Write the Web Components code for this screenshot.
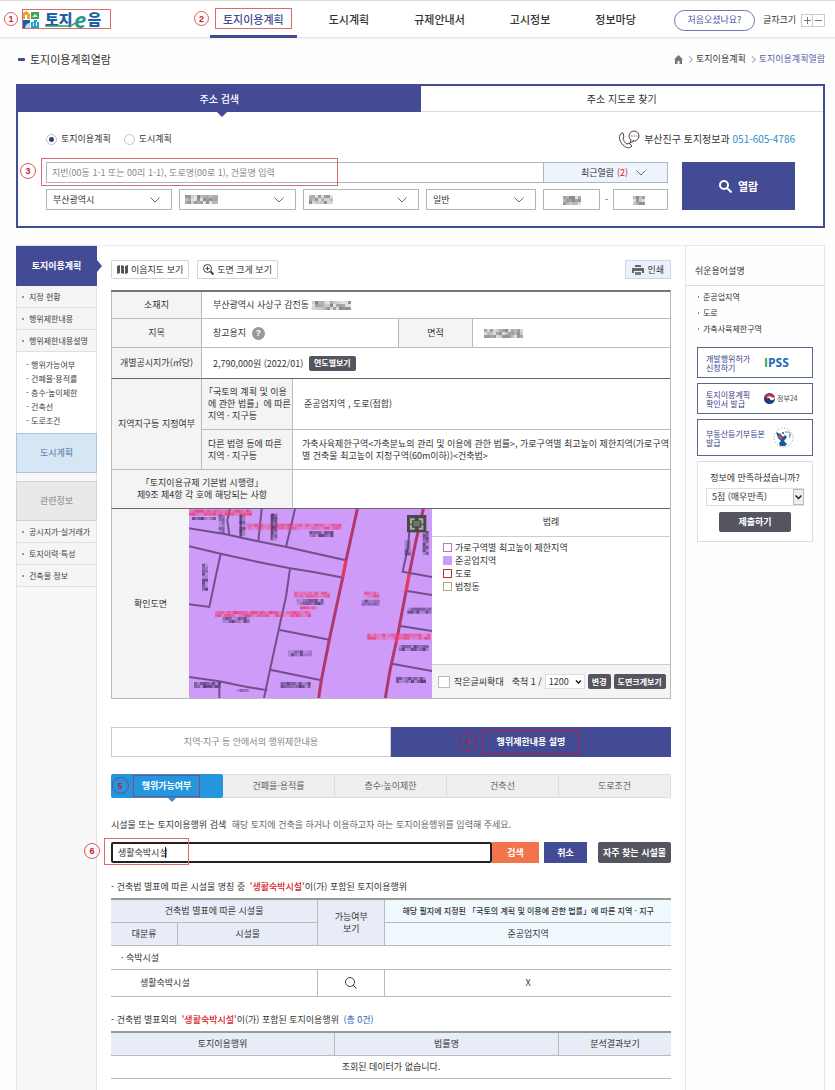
<!DOCTYPE html>
<html lang="ko">
<head>
<meta charset="utf-8">
<title>토지이음 - 토지이용계획열람</title>
<style>
html{height:100%}
body{margin:0;min-height:100%;display:flex;flex-direction:column;background:#fefefe;color:#444;
font-family:"Noto Sans CJK KR","Noto Sans",sans-serif;font-size:9px;line-height:12px}
land-page{flex:1}
</style>
</head>
<body>
<land-page></land-page>
<script>
const BASE = `*{box-sizing:border-box}button,input,select{font:inherit;color:inherit;margin:0;padding:0;border-radius:0}button{cursor:pointer}
a{color:inherit;text-decoration:none}ul,ol,h1,h2,h3,p{margin:0;padding:0;list-style:none;font:inherit}svg{display:block}
table{border-spacing:0;width:100%;table-layout:fixed}th,td{font-weight:400;padding:0}`;

function define(name, css, html, setup) {
  const t = document.createElement('template');
  t.innerHTML = `<style>${BASE}${css}</style>${html}`;
  customElements.define(name, class extends HTMLElement {
    constructor() {
      super();
      this.attachShadow({ mode: 'open' }).append(t.content.cloneNode(true));
    }
    connectedCallback() { if (setup) setup.call(this, this.shadowRoot); }
  });
}

function random(seed) {
  let s = seed * 7919 + 17;
  return () => (s = (s * 16807) % 2147483647) / 2147483647;
}

/* Grey mosaic that hides private values */
define('pixel-mask', `:host{display:inline-block;vertical-align:middle;pointer-events:none}`, `<svg aria-hidden="true"></svg>`, function (root) {
  const w = +this.getAttribute('w'), h = +this.getAttribute('h'), c = 3, svg = root.querySelector('svg');
  const r = random(+this.getAttribute('seed') || 1);
  svg.setAttribute('width', w); svg.setAttribute('height', h);
  let out = '';
  for (let y = 0; y < h; y += c) for (let x = 0; x < w; x += c) {
    const g = Math.round(135 + r() * 95);
    out += `<rect x="${x}" y="${y}" width="${c}" height="${c}" fill="rgb(${g},${g},${g})"/>`;
  }
  svg.innerHTML = out;
});

/* Red guide number and red guide frame */
define('guide-number', `:host{position:absolute;display:flex;align-items:center;justify-content:center;width:15px;height:15px;border:1px solid #dc5a5a;border-radius:50%;
color:#c8202c;font:700 9px/12px "Liberation Sans",sans-serif}`, `<slot></slot>`);
define('guide-frame', `:host{position:absolute;display:block;border:1px solid #dd6a6a;pointer-events:none}`, ``);

define('site-logo', `:host{display:block;position:relative;margin-left:22px;width:88px;height:20px}
a{display:flex;align-items:center;height:20px;font-weight:900;font-size:15px;line-height:20px;color:#1c5fa6}
.mark{margin-right:6px}.e{font-style:italic;color:#2a9a8c;font-size:22px;line-height:16px;width:15px;text-align:center;font-family:"Open Sans","Noto Sans",sans-serif;font-weight:700}
.swoosh{position:absolute;left:22px;top:12px}
guide-number{left:-18px;top:3px;width:14px;height:14px}guide-frame{left:0;top:0;right:-1px;bottom:0}`,
`<a href="#"><svg class="mark" width="17" height="17" viewBox="0 0 17 17" aria-hidden="true">
<path d="M0 3 4 0l4 3v5H0z" fill="#f0a02c"/><path d="M3 4h2v4H3z" fill="#fff"/>
<path d="M9 1h8v7H9z" fill="#3aa655"/><path d="m10 6 3-3 3 3z" fill="#d9f0d5"/>
<path d="M0 9h8v8H0z" fill="#1d5fa8"/><path d="M3 17a5 5 0 0 1 5-5v5z" fill="#bcd7ee"/>
<path d="M9 11h3V9h3v2h2v6H9z" fill="#1ba0d0"/><path d="M11 12h1v3h-1zm3-1h1v4h-1z" fill="#fff"/></svg>
<span>토지</span><span class="e">e</span><span>음</span></a>
<svg class="swoosh" width="62" height="8" viewBox="0 0 62 8" aria-hidden="true"><path d="M1 5h24c3 0 4-1 6-3" fill="none" stroke="#2f9d63" stroke-width="1.500"/></svg>
<guide-frame></guide-frame><guide-number>1</guide-number>`);

define('site-header', `:host{display:flex;align-items:center;height:38px;border-top:1px solid #ddd;border-bottom:1px solid #e6e6e6;box-shadow:0 1px 2px #eee;background:#fff;padding-right:10px}
nav{display:flex;gap:45px;margin-left:113px;font-size:11px;line-height:36px;font-weight:500;color:#333;white-space:nowrap}
nav a{position:relative}.on{color:#434b94}.on::after{content:"";position:absolute;left:-13px;right:-13px;bottom:-1px;height:3px;background:#434b94}
guide-frame{left:-8px;right:-8px;top:7px;bottom:8px}guide-number{left:-29px;top:10px}
.tools{margin-left:auto;display:flex;align-items:center;color:#333;white-space:nowrap;padding-top:2px}
.first{width:81px;height:21px;border:1px solid #6d78b2;border-radius:11px;background:#fff;color:#4a569c;margin-right:8px}
.size{display:flex;margin-left:5px}.size button{width:12px;height:13px;border:1px solid #ccc;background:#fff;color:#666;display:grid;place-items:center}.size button+button{border-left:0}`,
`<site-logo></site-logo>
<nav><a class="on" href="#">토지이용계획<guide-frame></guide-frame><guide-number>2</guide-number></a><a href="#">도시계획</a><a href="#">규제안내서</a><a href="#">고시정보</a><a href="#">정보마당</a></nav>
<div class="tools"><button class="first">처음오셨나요?</button><span>글자크기</span>
<span class="size"><button aria-label="글자 크게"><svg width="7" height="7"><path d="M0 3.500h7M3.500 0v7" stroke="#777"/></svg></button><button aria-label="글자 작게"><svg width="7" height="7"><path d="M0 3.500h7" stroke="#777"/></svg></button></span></div>`);

define('page-title', `:host{display:flex;align-items:center;justify-content:space-between;height:42px;margin:0 10px 4px 18px;color:#333}
h1{display:flex;align-items:center;gap:5px;font-size:11px;font-weight:400;line-height:16px}h1::before{content:"";width:7px;height:3px;border-radius:1px;background:#434b94}
ol{display:flex;align-items:center;gap:4px}li{display:flex;align-items:center;gap:4px}li+li::before{content:"";width:4px;height:4px;border:solid #aaa;border-width:1px 1px 0 0;transform:rotate(45deg)}.here{color:#5560a6}`,
`<h1>토지이용계획열람</h1><ol><li><a href="#" aria-label="홈"><svg width="9" height="9" viewBox="0 0 9 9"><path d="M4.500 0 9 4.500H8V9H5.500V6h-2v3H1V4.500H0z" fill="#777"/></svg></a></li><li><a href="#">토지이용계획</a></li><li class="here">토지이용계획열람</li></ol>`);

const CHEVRON = `<svg class="chev" width="10" height="6" viewBox="0 0 10 6" aria-hidden="true"><path d="m.5.5 4.500 4.500L9.500.5" fill="none" stroke="#5b6b86"/></svg>`;

/* Drop-down with a thin chevron; an optional mask can cover its value */
define('pick-box', `:host{display:block;position:relative;height:21px;color:#333}
select{appearance:none;width:100%;height:100%;border:1px solid #aab8c4;background:#fff;padding:0 6px}
.chev{position:absolute;right:12px;top:8px;pointer-events:none}.mask{position:absolute;left:6px;top:4px;line-height:12px;pointer-events:none}`,
`<select><option></option></select><span class="mask"><slot></slot></span>${CHEVRON}`, function (root) {
  root.querySelector('option').textContent = this.getAttribute('value') || '';
  root.querySelector('select').setAttribute('aria-label', this.getAttribute('label'));
});

define('search-panel', `:host{display:block;margin:0 10px 0 16px;border:2px solid #434b94;background:#fff}
.tabs{display:grid;grid-template-columns:1fr 1fr;height:26px;font-size:10px;color:#333}
.tabs button{position:relative;border:0;border-bottom:1px solid #ddd;background:#fff}
.tabs .on{background:#434b94;color:#fff;border-color:#434b94;font-weight:500}.tabs .on::after{content:"";position:absolute;left:50%;top:100%;margin-left:-3px;border:6px solid transparent;border-top-color:#434b94;border-bottom:0}
.body{padding:15px 28px 16px}.top{display:flex;align-items:center;height:24px;margin-bottom:11px;color:#333}
label{display:flex;align-items:center;gap:4px;margin-right:13px}
input[type=radio]{appearance:none;width:11px;height:11px;border:1px solid #bbc4cc;border-radius:50%;background:#fff}
input[type=radio]:checked{background:radial-gradient(#2f4468 0 2px,#fff 3px)}
.tel{margin-left:auto;display:flex;align-items:center;gap:3px;font-size:10px;font-weight:400}.tel a{color:#2b8ec6}
.form{display:flex;gap:14px}.fields{flex:1;display:grid;gap:6px;min-width:0}
.row{display:flex}.row>*{min-width:0}.addr{position:relative;flex:1}
.addr input{width:100%;height:21px;border:1px solid #aab8c4;border-right:0;padding:0 5px;background:#fff}::placeholder{color:#888;opacity:1}
.recent{width:125px;height:21px;border:1px solid #aab8c4;background:#eef4fc;color:#333;display:flex;align-items:center;justify-content:center;gap:3px;padding-left:16px}.recent b{font-weight:400;color:#d8232a}.recent .chev{margin-left:5px}
.picks{gap:7px}.lot{width:125px;display:flex;align-items:center;justify-content:space-between}
.num{position:relative;width:57px;height:21px}.num input{width:100%;height:100%;border:1px solid #aab8c4;background:#fff}.num pixel-mask{position:absolute;left:20px;top:7px}
.go{width:113px;border:0;background:#434b94;color:#fff;font-size:11px;font-weight:700;display:flex;align-items:center;justify-content:center;gap:6px}
guide-frame{left:-5px;top:-4px;width:297px;height:28px}guide-number{left:-26px;top:1px;width:16px;height:16px}`,
`<div class="tabs"><button class="on">주소 검색</button><button>주소 지도로 찾기</button></div>
<div class="body"><div class="top"><label><input type="radio" name="kind" checked>토지이용계획</label><label><input type="radio" name="kind">도시계획</label>
<div class="tel"><svg width="23" height="19" viewBox="0 0 23 19" aria-hidden="true" fill="none" stroke="#444"><path d="M4 3c-4 2-3 8 1 12 3 3 6 4 9 1l-3-3-2 1c-2-1-4-4-4-6l1-1-1-4z"/><circle cx="16" cy="6" r="5"/><path d="m13 10-1 3 4-2" fill="#fff"/><path d="M13 6h1.500m1 0H17m1 0h1.500" stroke="#d0503c"/></svg><span>부산진구 토지정보과 <a href="tel:051-605-4786">051-605-4786</a></span></div></div>
<div class="form"><div class="fields"><div class="row"><div class="addr"><input aria-label="주소" placeholder="지번(00동 1-1 또는 00리 1-1), 도로명(00로 1), 건물명 입력"><guide-frame></guide-frame><guide-number>3</guide-number></div><button class="recent">최근열람 <b>(2)</b>${CHEVRON}</button></div>
<div class="row picks"><pick-box style="flex:126" label="시도" value="부산광역시"></pick-box><pick-box style="flex:117" label="시군구"><pixel-mask w="33" h="9" seed="3"></pixel-mask></pick-box><pick-box style="flex:116" label="읍면동"><pixel-mask w="24" h="9" seed="8"></pixel-mask></pick-box><pick-box style="flex:110" label="구분" value="일반"></pick-box>
<div class="lot"><div class="num"><input aria-label="본번"><pixel-mask w="18" h="9" seed="5"></pixel-mask></div><span>-</span><div class="num" style="width:55px"><input aria-label="부번"><pixel-mask w="12" h="9" seed="9"></pixel-mask></div></div></div></div>
<button class="go"><svg width="13" height="13" viewBox="0 0 13 13" fill="none" stroke="#fff" stroke-width="2"><circle cx="5" cy="5" r="4"/><path d="m8 8 4.500 4.500"/></svg>열람</button></div></div>`);

define('side-menu', `:host{display:block;border:solid #e4e4e4;border-width:1px 1px 0;background:#f8f8f8;color:#444;font-size:8px;white-space:nowrap}
.head{position:relative;display:grid;place-items:center;height:40px;margin:0 -1px;background:#434b94;color:#fff;font-size:9px;font-weight:700}
.head::after{content:"";position:absolute;left:100%;top:14px;border:6px solid transparent;border-left:5px solid #434b94;border-right:0}
.list li{display:flex;align-items:center;height:22px;padding-left:5px;gap:4px;border-bottom:1px solid #e0e0e0;background:#f5f5f5}.list li::before{content:"";width:2px;height:2px;margin-right:1px;background:#999}
.sub{padding:6px 0 5px 9px;background:#fff}.sub li{line-height:14px}
.sky{background:#d7e6f4;border:1px solid #a9c6e0;color:#6c8eb4;font-weight:500}.grey{background:#e9e9e9;border:1px solid #d2d2d2;color:#999;margin-top:8px;font-weight:500}.sky::after,.grey::after{content:none}`,
`<a class="head" href="#">토지이용계획</a>
<ul class="list"><li><a href="#">지정 현황</a></li><li><a href="#">행위제한내용</a></li><li><a href="#">행위제한내용설명</a></li></ul>
<ul class="sub"><li><a href="#">- 행위가능여부</a></li><li><a href="#">- 건폐율·용적률</a></li><li><a href="#">- 층수·높이제한</a></li><li><a href="#">- 건축선</a></li><li><a href="#">- 도로조건</a></li></ul>
<a class="head sky" href="#">도시계획</a><div class="head grey">관련정보</div>
<ul class="list"><li><a href="#">공시지가·실거래가</a></li><li><a href="#">토지이력·특성</a></li><li><a href="#">건축물 정보</a></li></ul>`);

define('view-tools', `:host{display:flex;gap:8px;margin-bottom:11px}
button{height:19px;border:1px solid #d5d5d5;border-radius:1px;background:#fff;color:#333;display:flex;align-items:center;gap:3px;padding:0 5px;white-space:nowrap}
.print{margin-left:auto;background:#eaf1fb;border-color:#ccd6e4;padding:0 6px}`,
`<button><svg width="11" height="9" viewBox="0 0 11 9"><path d="M0 1 3 0v8L0 9zM4 0l3 1v8L4 8zM8 1l3-1v8L8 9z" fill="#555"/></svg>이음지도 보기</button>
<button><svg width="11" height="11" viewBox="0 0 11 11" fill="none" stroke="#444"><circle cx="4.500" cy="4.500" r="4"/><path d="M2.500 4.500h4m-2-2v4"/><path d="m7.500 7.500 3 3" stroke-width="2"/></svg>도면 크게 보기</button>
<button class="print"><svg width="12" height="10" viewBox="0 0 12 10"><path d="M3 0h6v2H3zM0 3h12v5h-2V6H2v2H0z" fill="#666"/><path d="M3 7h6v3H3z" fill="#777"/></svg>인쇄</button>`);

/* Parcel map: lot lines, road edges and masked labels */
define('parcel-map', `:host{display:block;height:189px;background:#cf9bf6}svg{width:100%;height:100%}`,
`<svg viewBox="27 26 729 567" preserveAspectRatio="xMidYMid slice" role="img" aria-label="확인도면">
<rect width="800" height="620" fill="#cf9bf8"/>
<g fill="none" stroke="#70508c" stroke-width="6">
<path d="M27 84 100 96 130 100 230 122 320 140 400 158 498 180M27 138 122 160 230 184 330 204 405 216 490 232M122 160 108 225 88 320 27 312M330 204 318 290 296 388 270 508 252 593M296 388 448 418M270 508 424 540M27 530 118 543 190 558 262 570M118 543v50M345 26 318 140M150 26 142 60 148 104M182 40v70M245 26 235 122M275 40v80M690 70 684 140 668 214 756 230M682 272 756 284M656 376 756 392M636 490 756 512"/></g>
<g fill="none" stroke="#b0386c" stroke-width="9"><path d="M532 26 498 180 488 232 448 418 424 540 416 593M730 26 706 130 688 220 652 410 630 510 616 593"/></g>
<g fill="none" stroke="#ee3560" stroke-width="9"><path d="M498 180 488 232M688 220 678 272M654 400 648 430"/></g>
<g class="labels"></g>
<rect x="681" y="44" width="58" height="52" fill="#48474c"/><path d="M690 54h14v6h-8v10h-6zm26 0h14v16h-6V60h-8zM690 74h6v8h8v6h-14zm34 0h6v14h-14v-6h8z" fill="#a9b093"/><path d="M700 62h20v16h-20z" fill="#707268"/>
</svg>`, function (root) {
  const r = random(4);
  const run = (x, y, w, h, colour) => {
    let s = '';
    for (let i = 0; i < w; i += 9) for (let j = 0; j < h; j += 9)
      s += `<rect x="${x + i}" y="${y + j}" width="9" height="9" fill="${colour}" opacity="${(0.15 + r() * 0.7).toFixed(2)}"/>`;
    return s;
  };
  const red = '#f03a6c', ink = '#4a3268';
  root.querySelector('.labels').innerHTML = [
    [27, 28, 189, 18, red], [196, 70, 288, 18, red], [342, 274, 108, 18, red], [105, 332, 288, 18, red], [360, 318, 54, 9, red], [553, 274, 45, 18, red], [562, 400, 189, 18, red],
    [36, 50, 72, 9, ink], [388, 92, 72, 18, ink], [350, 296, 81, 18, ink], [128, 350, 81, 18, ink], [324, 450, 72, 18, ink], [302, 545, 90, 18, ink], [545, 298, 54, 18, ink],
    [682, 322, 72, 18, ink], [656, 434, 90, 18, ink], [648, 530, 90, 18, ink], [42, 545, 81, 18, ink], [170, 566, 36, 9, ink],
    [66, 190, 18, 81, ink], [274, 40, 18, 81, ink], [178, 44, 18, 63, ink], [116, 44, 18, 54, ink], [728, 92, 18, 72, ink], [674, 120, 18, 45, ink]
  ].map(a => run(...a)).join('');
});

define('map-legend', `:host{display:flex;flex-direction:column;height:189px;color:#333;white-space:nowrap}
h3{height:28px;line-height:26px;text-align:center;border-bottom:1px solid #ccc}
ul{flex:1;padding:4px 11px}li{display:flex;align-items:center;gap:3px;line-height:13px;height:13px}li::before{content:"";width:7px;height:7px;border:1px solid var(--line);background:var(--fill,#fff)}
.foot{display:flex;align-items:center;height:34px;border-top:1px solid #ccc;background:#f4f4f4;padding:0 6px}
label{display:flex;align-items:center;gap:4px}input{appearance:none;width:12px;height:12px;border:1px solid #bbb;background:#fff}
.scale{margin:0 3px 0 8px}select{appearance:none;width:40px;height:15px;border:1px solid #ddd;background:#fff;padding-left:3px}.sel{position:relative}.sel svg{position:absolute;right:3px;top:6px;pointer-events:none}
button{height:15px;border:0;border-radius:2px;background:#555560;color:#fff;font-weight:700;padding:0 4px;margin-left:3px;font-size:8px}`,
`<h3>범례</h3><ul><li style="--line:#c36cd0">가로구역별 최고높이 제한지역</li><li style="--line:#cf9bf8;--fill:#cf9bf8">준공업지역</li><li style="--line:#b0303c">도로</li><li style="--line:#b5a694">법정동</li></ul>
<div class="foot"><label><input type="checkbox">작은글씨확대</label><label class="scale" for="s">축척 1 /</label><span class="sel"><select id="s"><option>1200</option></select><svg width="7" height="4" viewBox="0 0 7 4"><path d="m1 .5 2.500 2.500L6 .5" fill="none" stroke="#222" stroke-width="1.500"/></svg></span><button>변경</button><button>도면크게보기</button></div>`);

define('land-table', `:host{display:block;margin-bottom:28px;color:#333}
table{border-top:2px solid #777;border-right:1px solid #bbb}th,td{border:solid #bbb;border-width:0 0 1px 1px;line-height:12px}
th{background:#f4f4f4;text-align:center}td{padding:0 11px;text-align:left}
.dark th,.dark td{border-bottom-color:#666}.l{text-align:left;padding-left:6px;white-space:nowrap}.q{text-indent:-4px}
.zero{padding:0;border-left:0}.nw{white-space:nowrap}.zone{padding:0 0 0 9px;white-space:nowrap}
.help{display:inline-grid;place-items:center;width:13px;height:13px;border:0;border-radius:50%;background:#999;color:#fff;font:700 9px/13px "Liberation Sans",sans-serif;margin-left:3px}
.year{height:15px;border:0;border-radius:2px;background:#555560;color:#fff;font-weight:700;font-size:8px;padding:0 5px;margin-left:3px}`,
`<table><colgroup><col style="width:78px"><col style="width:12px"><col style="width:91px"><col style="width:106px"><col style="width:34px"><col style="width:40px"><col></colgroup>
<tr style="height:27px"><th colspan="2">소재지</th><td colspan="5">부산광역시 사상구 감전동 <pixel-mask w="39" h="9" seed="12"></pixel-mask></td></tr>
<tr style="height:29px"><th colspan="2">지목</th><td colspan="2">창고용지 <button class="help" aria-label="도움말">?</button></td><th colspan="2">면적</th><td><pixel-mask w="39" h="9" seed="21"></pixel-mask></td></tr>
<tr class="dark" style="height:31px"><th colspan="2" class="nw">개별공시지가(㎡당)</th><td colspan="5">2,790,000원 (2022/01) <button class="year">연도별보기</button></td></tr>
<tr style="height:51px"><th colspan="2" rowspan="2" class="nw">지역지구등 지정여부</th><th class="l"><div class="q">「국토의 계획 및 이용</div>에 관한 법률」에 따른<br>지역 · 지구등</th><td colspan="4">준공업지역 , 도로(접합)</td></tr>
<tr style="height:40px"><th class="l">다른 법령 등에 따른<br>지역 · 지구등</th><td colspan="4" class="zone">가축사육제한구역&lt;가축분뇨의 관리 및 이용에 관한 법률&gt;, 가로구역별 최고높이 제한지역(가로구역<br>별 건축물 최고높이 지정구역(60m이하))&lt;건축법&gt;</td></tr>
<tr class="dark" style="height:39px"><th colspan="3">「토지이용규제 기본법 시행령」<br>제9조 제4항 각 호에 해당되는 사항</th><td colspan="4"></td></tr>
<tr><th>확인도면</th><td colspan="4" class="zero"><parcel-map></parcel-map></td><td colspan="2" class="zero"><map-legend></map-legend></td></tr></table>`);

define('detail-tabs', `:host{display:block;margin-bottom:18px}
.big,.small{display:grid}.big{grid-template-columns:1fr 1fr;height:30px;margin-bottom:17px}.small{grid-template-columns:repeat(5,1fr);height:24px}
button{border:1px solid #ccc;background:#fff;color:#888}.big .on{background:#434b94;border-color:#434b94;color:#fff;font-weight:700}
.small button{position:relative;border-color:#ddd;border-left-width:0;background:#eee;color:#666}.small button:last-child{border-radius:0 2px 2px 0}
.small .on{background:#2496de;border-color:#2496de;color:#fff;font-weight:700;border-radius:2px}.small .on::after{content:"";position:absolute;left:50%;top:100%;border:5px solid transparent;border-top-color:#2496de;border-bottom:0}
.t{position:relative;display:inline-block}.big guide-frame{left:-15px;right:-15px;top:-6px;bottom:-6px;border-color:#b01c48}.big guide-number{left:-38px;top:-3px;width:18px;height:18px;border-color:#b01c48;font-size:8px}
.small guide-frame{left:-9px;right:-9px;top:-5px;bottom:-5px;border-color:#8a4a78}.small guide-number{left:-30px;top:-3px;width:17px;height:17px;border-color:#6d4a80}`,
`<div class="big"><button>지역·지구 등 안에서의 행위제한내용</button><button class="on"><span class="t">행위제한내용 설명<guide-frame></guide-frame><guide-number>4</guide-number></span></button></div>
<div class="small"><button class="on"><span class="t">행위가능여부<guide-frame></guide-frame><guide-number>5</guide-number></span></button><button>건폐율·용적률</button><button>층수·높이제한</button><button>건축선</button><button>도로조건</button></div>`);

define('facility-search', `:host{display:block;color:#333;margin-bottom:15px}
p{line-height:18px;margin-bottom:8px;color:#666}label{color:#333;margin-right:3px}
.row{display:flex}.field{position:relative;flex:1}input{width:100%;height:21px;border:2px solid #222;border-radius:2px;padding:0 5px;background:#fff;outline:0}
.caret{position:absolute;left:54px;top:5px;width:1px;height:11px;background:#222}
button{height:21px;border:0;color:#fff;font-weight:700;white-space:nowrap}.find{width:47px;background:#f2744c}.cancel{width:43px;margin:0 11px 0 5px;background:#434b94}.often{width:73px;background:#555560;border-radius:2px}
guide-frame{left:-7px;top:-4px;width:85px;height:27px}guide-number{left:-27px;top:1px;width:16px;height:16px}`,
`<p><label for="f">시설물 또는 토지이용행위 검색</label> 해당 토지에 건축을 하거나 이용하고자 하는 토지이용행위를 입력해 주세요.</p>
<div class="row"><div class="field"><input id="f" value="생활숙박시설"><span class="caret"></span><guide-frame></guide-frame><guide-number>6</guide-number></div><button class="find">검색</button><button class="cancel">취소</button><button class="often">자주 찾는 시설물</button></div>`);

define('result-tables', `:host{display:block;color:#333}
h2{line-height:18px;margin-bottom:2px}h2 b{margin-left:2px;color:#d8232a;font-weight:500}h2 i{font-style:normal;color:#2a62c0;margin-left:2px}
table{border-top:2px solid #999;margin-bottom:14px}th,td{border-bottom:1px solid #bbb;text-align:center}th{background:#e8ecf7}.sky{background:#f0fafe}.r{border-right:1px solid #bbb}.long{font-size:8px;font-weight:500}
.l{text-align:left;padding-left:10px}.l2{text-align:left;padding-left:29px}td button{display:grid;margin:auto;border:0;background:none}`,
`<h2>- 건축법 별표에 따른 시설물 명칭 중 <b>'생활숙박시설'</b>이(가) 포함된 토지이용행위</h2>
<table><colgroup><col style="width:12%"><col style="width:25%"><col style="width:12%"><col></colgroup>
<tr style="height:23px"><th class="r" colspan="2">건축법 별표에 따른 시설물</th><th class="r" rowspan="2">가능여부<br>보기</th><th class="sky long">해당 필지에 지정된 「국토의 계획 및 이용에 관한 법률」에 따른 지역 · 지구</th></tr>
<tr style="height:23px"><th class="r">대분류</th><th class="r">시설물</th><th class="sky">준공업지역</th></tr>
<tr style="height:24px"><td class="l" colspan="4">· 숙박시설</td></tr>
<tr style="height:27px"><td class="r l2" colspan="2">생활숙박시설</td><td class="r"><button aria-label="가능여부 보기"><svg width="12" height="12" viewBox="0 0 12 12" fill="none" stroke="#444"><circle cx="5" cy="5" r="4.500"/><path d="m8 8 3.500 3.500"/></svg></button></td><td>X</td></tr></table>
<h2>- 건축법 별표외의 <b>'생활숙박시설'</b>이(가) 포함된 토지이용행위 <i>(총 0건)</i></h2>
<table style="margin:0"><colgroup><col style="width:40%"><col style="width:40%"><col></colgroup>
<tr style="height:23px"><th class="r">토지이용행위</th><th class="r">법률명</th><th>분석결과보기</th></tr><tr style="height:23px"><td colspan="3">조회된 데이터가 없습니다.</td></tr></table>`);

define('info-aside', `:host{display:block;border:solid #e8e8e8;border-width:1px 1px 0;color:#333;white-space:nowrap}
h2{height:40px;border-bottom:1px solid #ddd;padding:19px 9px 0;line-height:12px}
.words{padding:3px 12px 10px;font-size:8px}.words li{line-height:16px;display:flex;align-items:center;gap:4px}.words li::before{content:"";width:1px;height:2px;background:#888}
.card{display:flex;align-items:center;height:31px;margin:0 11px 5px;border:1px solid #5a6590;background:#fff;padding-left:8px;font-size:8px;line-height:9px;color:#3a4488}
.card span{width:58px}.ipss{font:700 12px/12px "Open Sans","Noto Sans",sans-serif;color:#1c6bb4;margin:0}.ipss i{font-style:normal;color:#35a14a}
.gov{display:flex;align-items:center;gap:2px;color:#555;font-size:7px}.tall{height:37px}.tall svg{margin-left:9px}
.vote{margin:0 11px;height:81px;border:1px solid #ddd;display:flex;flex-direction:column;align-items:center;padding-top:9px;background:#fff}
.vote label{line-height:14px}.sel{position:relative;width:98px;height:18px;margin:3px 0 6px}select{appearance:none;width:100%;height:100%;border:1px solid #e0e0e0;background:#fff;padding-left:5px}
.arr{position:absolute;right:0;top:1px;width:11px;height:16px;border:1px solid #bbb;background:#eee;display:grid;place-items:center;pointer-events:none}
button{width:72px;height:20px;border:0;border-radius:2px;background:#555560;color:#fff;font-weight:700}`,
`<h2>쉬운용어설명</h2><ul class="words"><li><a href="#">준공업지역</a></li><li><a href="#">도로</a></li><li><a href="#">가축사육제한구역</a></li></ul>
<a class="card" href="#"><span>개발행위허가<br>신청하기</span><em class="ipss"><i>I</i>PSS</em></a>
<a class="card" href="#"><span>토지이용계획<br>확인서 발급</span><em class="gov" style="font-style:normal"><svg width="11" height="11" viewBox="0 0 11 11"><circle cx="5.500" cy="5.500" r="5.500" fill="#1b3d7a"/><path d="M1 3a5.500 5.500 0 0 1 10 2c-2 2-3 0-5 0S3 8 1 3z" fill="#cf2f42"/><path d="M3 5c1-2 3-2 4-1 2 1 3 1 4 0-1 4-4 4-5 2s-2-1-3-1z" fill="#fff"/></svg>정부24</em></a>
<a class="card tall" href="#"><span>부동산등기부등본<br>발급</span><svg width="21" height="21" viewBox="0 0 21 21"><circle cx="10.500" cy="10.500" r="9.500" fill="none" stroke="#8494ac" stroke-dasharray="1 2"/><path d="m3 5 4 2 3 3 2-2 2 2-3 4 3 3-2 2H7l-1-3 2-2-3-3z" fill="#1b579c"/><path d="m7 6 3 4-2 3-2-3z" fill="#d23f4c"/><path d="m4 8 3 1 1 4z" fill="#2c9e86"/><path d="M12 5h4l2 3h-2l1 3" fill="none" stroke="#6889b4"/><circle cx="10" cy="6" r="1" fill="#1b579c"/></svg></a>
<div class="vote"><label for="v">정보에 만족하셨습니까?</label><span class="sel"><select id="v"><option>5점 (매우만족)</option></select><span class="arr"><svg width="7" height="5" viewBox="0 0 7 5"><path d="m.5.500 3 3 3-3" fill="none" stroke="#222" stroke-width="1.500"/></svg></span></span><button>제출하기</button></div>`);

define('land-page', `:host{display:flex;flex-direction:column}
main{flex:1;display:grid;grid-template-columns:81px minmax(0,1fr) 140px;margin:17px 10px 0 16px}
.content{border-top:1px solid #eee;padding:14px 14px 8px;background:#fff}`,
`<site-header></site-header><page-title></page-title><search-panel></search-panel>
<main><side-menu></side-menu><section class="content"><view-tools></view-tools><land-table></land-table><detail-tabs></detail-tabs><facility-search></facility-search><result-tables></result-tables></section><info-aside></info-aside></main>`);
</script>
</body>
</html>
